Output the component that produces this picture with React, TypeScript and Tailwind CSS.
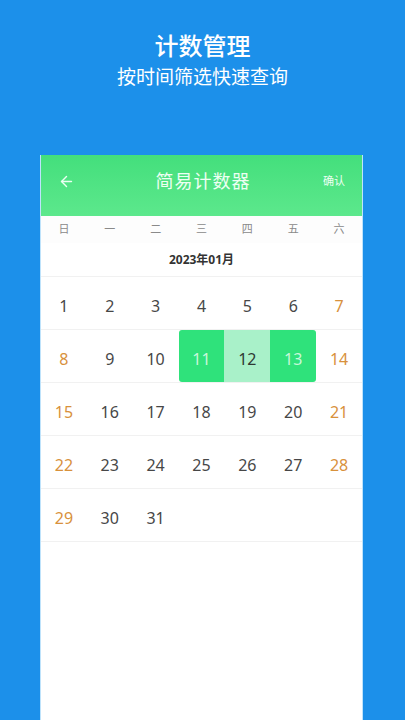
import { ArrowLeft } from 'lucide-react';

const WEEK = ['日', '一', '二', '三', '四', '五', '六'];

// January 2023 starts on a Sunday
const ROWS: Array<Array<number | null>> = [
  [1, 2, 3, 4, 5, 6, 7],
  [8, 9, 10, 11, 12, 13, 14],
  [15, 16, 17, 18, 19, 20, 21],
  [22, 23, 24, 25, 26, 27, 28],
  [29, 30, 31, null, null, null, null],
];

const RANGE_START = 11;
const RANGE_END = 13;

function DayCell({ day, col }: { day: number | null; col: number }) {
  if (day === null) return <div className="h-full" />;
  // the 1st keeps the plain colour, other weekend days are highlighted
  const weekend = (col === 0 || col === 6) && day !== 1;
  const isStart = day === RANGE_START;
  const isEnd = day === RANGE_END;
  const inRange = day > RANGE_START && day < RANGE_END;

  let cls = 'text-[#474747]';
  if (weekend) cls = 'text-[#d8913c]';
  if (isStart || isEnd) cls = 'bg-[#2fe27b] text-[#c9f7da]';
  if (inRange) cls = 'bg-[#a9f1c9] text-[#2f3a33]';
  if (isStart) cls += ' rounded-l-[3px]';
  if (isEnd) cls += ' rounded-r-[3px]';

  return (
    <div className={`h-full flex items-center justify-center pt-[6px] text-[16px] ${cls}`}>
      {day}
    </div>
  );
}

export default function App() {
  return (
    <div
      className="h-[720px] w-full overflow-hidden bg-[#1c90ea] flex flex-col items-center"
      style={{ fontFamily: '"Noto Sans", "Noto Sans CJK SC", sans-serif' }}
    >
      <h1 className="mt-[30px] text-[24px] leading-[32px] font-medium text-white">计数管理</h1>
      <p className="mt-[2px] text-[19px] leading-[26px] text-white">按时间筛选快速查询</p>

      <div className="mt-[65px] ml-[-2px] w-[323px] flex-1 bg-white border-x border-[#bfe3fb] flex flex-col">
        <header className="h-[61px] bg-gradient-to-b from-[#43df7c] to-[#5ce88c] flex items-center px-[17px] pb-[8px]">
          <ArrowLeft className="w-[17px] h-[17px] text-[#eafff1]" strokeWidth={2} />
          <span className="flex-1 text-center text-[18px] text-[#ecfff2] tracking-[1px] pl-[8px]">简易计数器</span>
          <span className="text-[11px] text-[#ecfff2]">确认</span>
        </header>

        <div className="grid grid-cols-7 h-[27px] items-center bg-[#fdfdfd]">
          {WEEK.map((w) => (
            <span key={w} className="text-center text-[11px] text-[#8a8a8a]">
              {w}
            </span>
          ))}
        </div>

        <div className="h-[34px] flex items-center justify-center border-b border-[#f1f1f1] text-[12px] font-bold text-[#333]">
          2023年01月
        </div>

        {ROWS.map((row, r) => (
          <div key={r} className="grid grid-cols-7 h-[53px] border-b border-[#f1f1f1]">
            {row.map((d, c) => (
              <DayCell key={c} day={d} col={c} />
            ))}
          </div>
        ))}
      </div>
    </div>
  );
}
